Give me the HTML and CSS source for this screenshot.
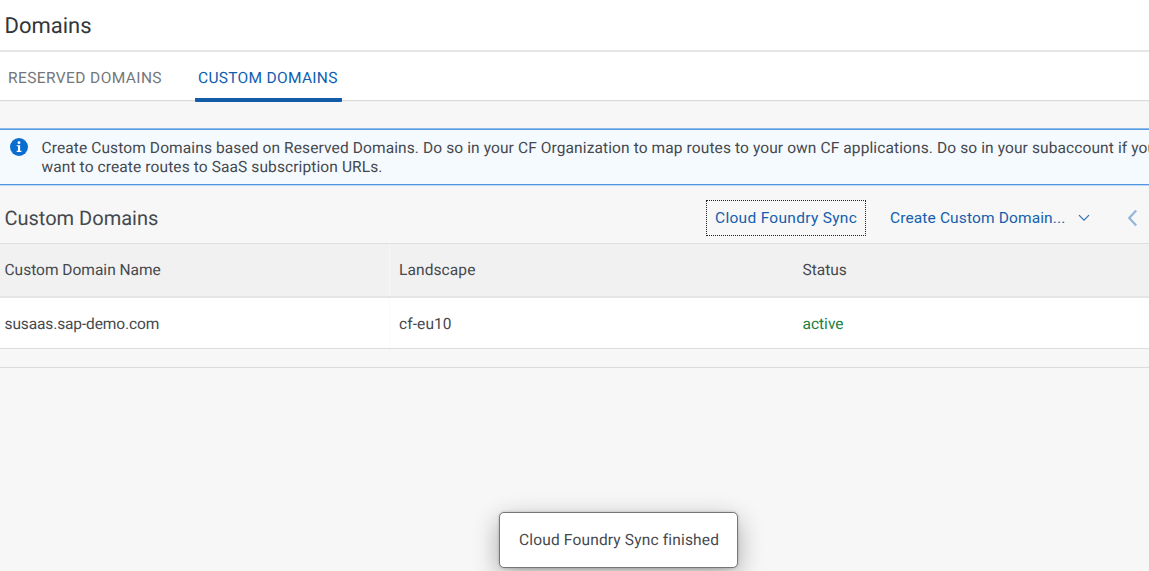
FILE: index.html
```html
<!DOCTYPE html>
<html lang="en">
<head>
<meta charset="utf-8">
<title>Domains</title>
<link rel="stylesheet" href="styles.css">
</head>
<body>
<header class="page-header"><h1 class="page-title">Domains</h1></header>
<nav class="tabs">
  <a class="tab tab-reserved">RESERVED DOMAINS</a>
  <a class="tab tab-active">CUSTOM DOMAINS</a>
</nav>
<main class="content">
  <section class="info">
    <svg class="info-icon" viewBox="0 0 18 18"><circle cx="9" cy="9" r="9" fill="#0a6ed1"/><circle cx="9" cy="4.7" r="1.4" fill="#fff"/><path d="M6.7 7.2h3.4v5.6h1.3v1.1H6.7v-1.1H8V8.3H6.7z" fill="#fff"/></svg>
    <p class="info-text">Create Custom Domains based on Reserved Domains. Do so in your CF Organization to map routes to your own CF applications. Do so in your subaccount if you<br>want to create routes to SaaS subscription URLs.</p>
  </section>
  <div class="toolbar">
    <h2 class="section-title">Custom Domains</h2>
    <button class="sync">Cloud Foundry Sync</button>
    <button class="create">Create Custom Domain...<svg class="chevron-down" viewBox="0 0 12 8"><path d="M1 1.2l5 5 5-5" fill="none" stroke="#2c6fb5" stroke-width="1.2"/></svg></button>
    <svg class="chevron-left" viewBox="0 0 10 18"><path d="M9.2 1.5L2.2 9l7 7.5" fill="none" stroke="#93b6da" stroke-width="2.2"/></svg>
  </div>
  <div class="row head-row">
    <div class="cell">Custom Domain Name</div><div class="cell landscape">Landscape</div><div class="cell">Status</div>
  </div>
  <div class="row data-row">
    <div class="cell domain">susaas.sap-demo.com</div><div class="cell landscape">cf-eu10</div><div class="cell active">active</div>
  </div>
  <div class="table-footer"></div>
</main>
<div class="toast">Cloud Foundry Sync finished</div>
</body>
</html>
```
FILE: styles.css
```css
* { box-sizing: border-box; }
body { margin: 0; height: 571px; overflow: hidden; background: #f7f7f7; color: #45494e; font: 15.5px/19px Roboto, "Noto Sans", sans-serif; text-rendering: geometricPrecision; }
h1, h2, p { margin: 0; font-weight: 400; }
.page-header { height: 52px; padding: 13px 4.5px 0; background: #fff; border-bottom: 2px solid #e5e5e5; }
.page-title { font-size: 22px; line-height: 27px; color: #32363a; }
.tabs { display: flex; gap: 33px; height: 48px; padding-left: 8px; background: #fff; box-shadow: 0 1px 1px #d9d9d9; }
.tab { height: 49px; padding-top: 17px; color: #74777a; letter-spacing: .4px; white-space: nowrap; }
.tab-reserved { width: 154px; }
.tab-active { width: 147px; padding-left: 3px; color: #0f5eb0; letter-spacing: .3px; height: 50px; background: linear-gradient(#145ba8, #145ba8) 0 100% / 100% 4px no-repeat; border-radius: 2px 2px 1px 1px; }
.content { padding-top: 28px; }
.info { display: flex; height: 57px; padding: 9px 0 0 10px; background: #f5faff; border-top: 1px solid #8bbaed; border-bottom: 1px solid #4f95e0; box-shadow: inset 0 1px #5a9ce2, 0 1px #bcd8f4; }
.info-icon { width: 18px; height: 18px; flex: none; }
.info-text { margin: 1px 0 0 13.5px; white-space: nowrap; letter-spacing: .11px; }
.toolbar { display: flex; align-items: center; height: 59px; padding: 7px 0 0 4.5px; border-bottom: 1px solid #dedede; }
.section-title { width: 701.5px; font-size: 20px; line-height: 24px; }
button { font: inherit; color: #145fad; border: 0; background: none; padding: 0; white-space: nowrap; text-align: left; }
.sync { width: 160px; height: 36px; padding: 1px 0 0 8px; border: 1px dotted #222; letter-spacing: .3px; }
.create { display: flex; align-items: center; justify-content: space-between; width: 200px; margin: 1px 0 0 24px; letter-spacing: .13px; }
.chevron-down { width: 12px; height: 8px; }
.chevron-left { width: 10px; height: 18px; margin-left: 37px; }
.row { display: grid; grid-template-columns: 394.5px 403.5px 1fr; padding-left: 4.5px; align-items: center; }
.head-row { height: 54px; background: linear-gradient(90deg, transparent 389px, #f6f6f6 389px, #f6f6f6 390px, transparent 390px), #f1f1f1; border-bottom: 2px solid #e5e5e5; }
.data-row { height: 51px; padding-top: 2px; background: linear-gradient(90deg, transparent 389px, #fafafa 389px, #fafafa 390px, transparent 390px), #fff; border-bottom: 1px solid #dcdcdc; }
.landscape { letter-spacing: .1px; }
.domain { letter-spacing: -.12px; }
.active { color: #1c8042; }
.table-footer { height: 19px; border-bottom: 1px solid #dcdcdc; }
.toast { position: absolute; left: 499px; top: 512px; width: 239px; height: 56px; padding: 18px 19px; white-space: nowrap; background: #fff; border: 1px solid #777; border-radius: 5px; box-shadow: 0 8px 26px rgba(0,0,0,.32), 0 0 3px rgba(0,0,0,.2); letter-spacing: .17px; }
```
